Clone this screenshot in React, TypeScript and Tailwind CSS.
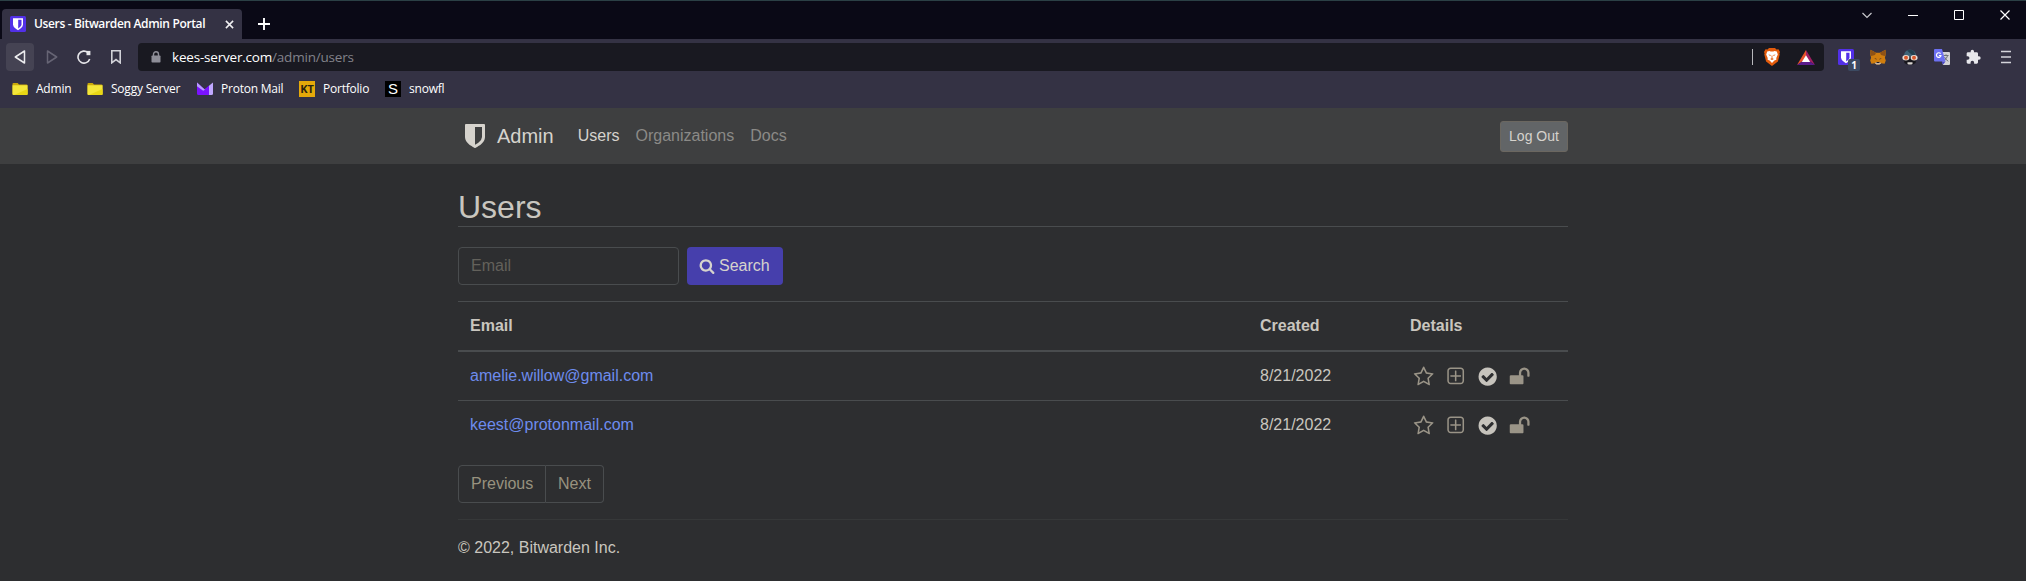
import React from 'react';

const UI = "font-['Open_Sans','Noto_Sans',sans-serif]";

const paths = {
  star: 'M1201 1004l306-297-422-62-189-382-189 382-422 62 306 297-73 421 378-199 377 199zm527-357q0 22-26 48l-363 354 86 500q1 7 1 20 0 50-41 50-19 0-40-12l-449-236-449 236q-22 12-40 12-21 0-31.500-14.500t-10.500-35.500q0-6 2-20l86-500-364-354q-25-27-25-48 0-37 56-46l502-73 225-455q19-41 49-41t49 41l225 455 502 73q56 9 56 46z',
  plus: 'M1344 800v64q0 14-9 23t-23 9h-352v352q0 14-9 23t-23 9h-64q-14 0-23-9t-9-23v-352h-352q-14 0-23-9t-9-23v-64q0-14 9-23t23-9h352v-352q0-14 9-23t23-9h64q14 0 23 9t9 23v352h352q14 0 23 9t9 23zm128 448v-832q0-66-47-113t-113-47h-832q-66 0-113 47t-47 113v832q0 66 47 113t113 47h832q66 0 113-47t47-113zm128-832v832q0 119-84.500 203.500t-203.500 84.500h-832q-119 0-203.500-84.500t-84.500-203.500v-832q0-119 84.500-203.500t203.500-84.500h832q119 0 203.500 84.500t84.500 203.500z',
  check: 'M1412 734q0-28-18-46l-91-90q-19-19-45-19t-45 19l-408 407-226-226q-19-19-45-19t-45 19l-91 90q-18 18-18 46 0 27 18 45l362 362q19 19 45 19 27 0 46-19l543-543q18-18 18-45zm252 162q0 209-103 385.500t-279.500 279.500-385.500 103-385.500-103-279.500-279.500-103-385.500 103-385.500 279.500-279.500 385.500-103 385.500 103 279.500 279.500 103 385.500z',
  unlock: 'M1728 576v256q0 26-19 45t-45 19h-64q-26 0-45-19t-19-45v-256q0-106-75-181t-181-75-181 75-75 181v192h96q40 0 68 28t28 68v576q0 40-28 68t-68 28h-960q-40 0-68-28t-28-68v-576q0-40 28-68t68-28h672v-192q0-185 131.500-316.500t316.500-131.500 316.500 131.500 131.500 316.500z',
  search: 'M1216 832q0-185-131.500-316.500t-316.500-131.500-316.500 131.500-131.500 316.500 131.500 316.500 316.500 131.500 316.500-131.500 131.500-316.500zm512 832q0 52-38 90t-90 38q-54 0-90-38l-343-342q-179 124-399 124-143 0-273.500-55.500t-225-150-150-225-55.500-273.500 55.500-273.500 150-225 225-150 273.500-55.500 273.500 55.500 225 150 150 225 55.500 273.500q0 220-124 399l343 343q37 37 37 90z',
  shield: 'M1344 960v-640h-448v1137q119-63 213-137 235-184 235-360zm192-768v768q0 86-33.500 170.500t-83 150-118 127.500-126.500 103-121 77.500-89.500 49.500-42.500 20q-12 6-26 6t-26-6q-16-7-42.500-20t-89.500-49.500-121-77.500-126.500-103-118-127.500-83-150-33.500-170.500v-768q0-26 19-45t45-19h1152q26 0 45 19t19 45z',
};

function Glyph({ name, className }: { name: keyof typeof paths; className: string }) {
  return (
    <svg viewBox="0 0 1792 1792" fill="currentColor" className={`block shrink-0 ${className}`}>
      <path d={paths[name]} />
    </svg>
  );
}

function BitwardenBadge() {
  return (
    <svg viewBox="0 0 16 16" className="block size-4 shrink-0">
      <rect width="16" height="16" rx="1.500" fill="#5230e8" />
      <path d="M3 2.300h10v6c0 2.700-2.600 4.700-5 5.900-2.400-1.200-5-3.200-5-5.900z" fill="#fff" />
      <path d="M8.200 3.700h3.300v4.600c0 1.700-1.600 3-3.300 4.100z" fill="#5230e8" />
    </svg>
  );
}

function Folder() {
  return (
    <svg viewBox="0 0 16 16" className="block size-4 shrink-0">
      <path d="M.5 3q0-1 1-1h4.200l1.300 1.400h7.500q1 0 1 1V13q0 1-1 1h-13q-1 0-1-1z" fill="#c9a90a" />
      <path d="M.5 4.300h15V13q0 1-1 1h-13q-1 0-1-1z" fill="#f3e63a" />
      <path d="M2 14L15.500 8v5q0 1-1 1z" fill="#e8d715" />
    </svg>
  );
}

function Bookmark({ icon, label, className }: { icon: React.ReactNode; label: string; className: string }) {
  return (
    <div className={`flex shrink-0 items-center gap-2 whitespace-nowrap ${className}`}>
      {icon}
      <span>{label}</span>
    </div>
  );
}

function TabStrip() {
  return (
    <div className="flex h-[39px] justify-between border-t border-[#2b4045] bg-[#0a0916] pl-0.5">
      <div className="flex pt-2">
        <div className="flex h-[30px] w-60 items-center rounded-t bg-[#343244] pl-2">
          <BitwardenBadge />
          <span className="ml-2 w-[189px] whitespace-nowrap text-[12px] font-semibold tracking-[-0.350px] text-white">
            Users - Bitwarden Admin Portal
          </span>
          <svg viewBox="0 0 10 10" className="ml-0.5 block size-[9px]" stroke="#f0f0f2" strokeWidth="1.700">
            <path d="M1 1l8 8M9 1l-8 8" />
          </svg>
        </div>
        <svg viewBox="0 0 12 12" className="ml-4 mt-[9px] block size-3" stroke="#fff" strokeWidth="1.900">
          <path d="M6 0v12M0 6h12" />
        </svg>
      </div>
      <svg viewBox="0 0 168 30" className="block h-[30px] w-[168px]" fill="none" stroke="#fff">
        <path d="M4.500 12l4.500 4.500 4.500-4.500" stroke="#c8c8cc" strokeWidth="1.200" />
        <path d="M50 14.500h10" />
        <path d="M96.500 9.500h9v9h-9z" />
        <path d="M142.500 9.500l9 9M151.500 9.500l-9 9" strokeWidth="1.200" />
      </svg>
    </div>
  );
}

function BraveIcon() {
  return (
    <svg viewBox="0 0 16 18" className="block h-[18px] w-4">
      <path d="M5 0h6l1.500 1.500 2-.2L16 4l-.6 1.500.3 1-1.800 7L8 18l-5.900-4.500-1.800-7 .3-1L0 4l1.500-2.700 2 .2z" fill="#e35b0c" />
      <path d="M3.200 3.600l2.300-.6 1.200.5h2.600l1.200-.5 2.300.6 1 3-1.500 3.400.1 1.800-2 .8L8 15l-2.400-2.400-2-.8.1-1.800-1.500-3.400z" fill="#fff" />
      <path d="M4.300 6.400l2.600.6-.7 1.100zM11.700 6.400l-2.600.6.7 1.100zM7.600 7.500h.8v2.700l1.500.9-1.900 1-1.900-1 1.500-.9z" fill="#e35b0c" />
    </svg>
  );
}

function BatIcon() {
  return (
    <svg viewBox="0 0 18 15" className="block h-[15px] w-[18px]">
      <path d="M9 0L0 15l9-6z" fill="#e8522a" />
      <path d="M9 0l9 15-9-6z" fill="#9e1f63" />
      <path d="M0 15h18L9 9z" fill="#5a1b8c" />
      <path d="M9 5.300L4.800 12h8.400z" fill="#fff" />
    </svg>
  );
}

function MetaMaskIcon() {
  return (
    <svg viewBox="0 0 16 16" className="block size-4">
      <path d="M.5.8L6 3.800h4l5.500-3 .2 4.700-.8 3.300.9 2.700-1.200 3.200-3.400-.5L9.500 15.500h-3l-1.700-1.300-3.400.5L.2 11.500l.9-2.700L.3 5.500z" fill="#cf7d0e" />
      <path d="M.5.8L6 3.800 5 6 1.300 7 .3 5.500zM15.500.8L10 3.800 11 6l3.700 1 1-1.500z" fill="#8e5216" />
      <path d="M4.200 9l2.100.8.2 1zM11.800 9l-2.100.8-.2 1z" fill="#2a2030" />
      <path d="M4.800 14.200l1.500-1.200h3.400l1.500 1.200-1.700 1.300h-3z" fill="#c8b8a8" />
      <path d="M6.600 12.900h2.800l.2 1.200H6.400z" fill="#221a22" />
    </svg>
  );
}

function SpyIcon() {
  return (
    <svg viewBox="0 0 16 16" className="block size-4">
      <path d="M2 7.500C2 3 4.500.8 8 .8s6 2.200 6 6.700z" fill="#3f6478" />
      <path d="M5 1.500l5 4.500h3C13 3 11 .8 8 .8z" fill="#24404f" />
      <path d="M1.500 8h13l-1 6L11 15.500H5L2.500 14z" fill="#17161c" />
      <path d="M5.500 13.300h5v1.800q-2.500 1-5 0z" fill="#d9d4d0" />
      <ellipse cx="3.900" cy="8.800" rx="3.500" ry="2.700" fill="#e9ded6" />
      <ellipse cx="12.100" cy="8.800" rx="3.500" ry="2.700" fill="#e9ded6" />
      <circle cx="4" cy="8.800" r="2" fill="#d9592c" />
      <circle cx="12" cy="8.800" r="2" fill="#d9592c" />
    </svg>
  );
}

function TranslateIcon() {
  return (
    <svg viewBox="0 0 16 16" className="block size-4">
      <path d="M6 3h9q1 0 1 1v11q0 1-1 1H9z" fill="#d4d4d6" />
      <path d="M9.500 6.500h5M12 5.300v1.200M13.700 6.500q-1 3.500-3.700 5M10.500 8q1 2.500 3.800 4.300" stroke="#6f7478" fill="none" />
      <path d="M1 0h7l3.500 12.500H1q-1 0-1-1V1q0-1 1-1z" fill="#6c70f2" />
      <path d="M7.500 12.500h4L9 15.800z" fill="#4a49c4" />
      <path d="M6.600 4.700A2.300 2.300 0 1 0 7 6.500H4.900" stroke="#fff" strokeWidth="1.200" fill="none" />
    </svg>
  );
}

function Toolbar() {
  return (
    <div className="flex h-9 items-center pl-1.5 pr-3">
      <div className="flex h-7 w-7 items-center justify-center rounded bg-[#454353]">
        <svg viewBox="0 0 12 14" className="block h-3.5 w-3" fill="none" stroke="#ececee" strokeWidth="1.500" strokeLinejoin="round">
          <path d="M10.500 1v12L1.300 7z" />
        </svg>
      </div>
      <svg viewBox="0 0 12 14" className="ml-3 block h-3.5 w-3" fill="none" stroke="#666474" strokeWidth="1.500" strokeLinejoin="round">
        <path d="M1.500 1v12l9.200-6z" />
      </svg>
      <svg viewBox="0 0 14 14" className="ml-[19px] block size-3.5" fill="none" stroke="#e6e6ea" strokeWidth="1.600">
        <path d="M12.700 9A6 6 0 1 1 11 2.600" />
        <path d="M9.500.9h3.900v4.300h-3.900z" fill="#e6e6ea" stroke="none" />
      </svg>
      <svg viewBox="0 0 10 14" className="ml-[19px] block h-3.5 w-3" fill="none" stroke="#d2d2d8" strokeWidth="1.600">
        <path d="M.8.800h8.400v12L5 9.600.8 12.800z" />
      </svg>
      <div className="ml-4 flex h-7 w-[1686px] items-center rounded bg-[#191921] pl-[13px]">
        <svg viewBox="0 0 10 12" className="block h-3 w-2.5">
          <path d="M2.500 5V3.300a2.500 2.500 0 0 1 5 0V5" fill="none" stroke="#8e8e98" strokeWidth="1.400" />
          <rect x=".5" y="4.500" width="9" height="7" rx=".8" fill="#8e8e98" />
        </svg>
        <div className="ml-[11px] flex-1 whitespace-nowrap text-[13.500px] leading-7 tracking-[-0.200px] text-[#82828a]">
          <span className="text-white">kees-server.com</span>/admin/users
        </div>
        <div className="h-4 w-px bg-[#b8b8bc]" />
        <div className="ml-[11px]"><BraveIcon /></div>
        <div className="ml-[17px] mr-[9px]"><BatIcon /></div>
      </div>
      <div className="ml-3.5 flex items-center gap-4">
        <div className="relative">
          <BitwardenBadge />
          <span className="absolute left-[10px] top-[10px] flex h-3 w-3 items-center justify-center rounded-xs bg-[#3c4a62] text-[10px] font-bold leading-3 text-white">1</span>
        </div>
        <MetaMaskIcon />
        <SpyIcon />
        <TranslateIcon />
        <svg viewBox="1 0 24 24" className="block size-4" fill="#e8e8ec">
          <path d="M20.500 11H19V7c0-1.100-.9-2-2-2h-4V3.500a2.500 2.500 0 0 0-5 0V5H4c-1.100 0-2 .9-2 2v3.800h1.500a2.700 2.700 0 0 1 0 5.400H2V20c0 1.100.9 2 2 2h3.800v-1.500a2.700 2.700 0 0 1 5.400 0V22H17c1.100 0 2-.9 2-2v-4h1.500a2.500 2.500 0 0 0 0-5z" />
        </svg>
        <svg viewBox="0 0 16 16" className="block size-4" stroke="#d4d4da" strokeWidth="1.700">
          <path d="M3 2.500h10M3 8h10M3 13.500h10" />
        </svg>
      </div>
    </div>
  );
}

function Bookmarks() {
  return (
    <div className="flex h-7 items-center pl-3 text-[12px] tracking-[-0.220px] text-white">
      <Bookmark className="w-[75px]" icon={<Folder />} label="Admin" />
      <Bookmark className="w-[110px]" icon={<Folder />} label="Soggy Server" />
      <Bookmark
        className="w-[102px]"
        label="Proton Mail"
        icon={
          <svg viewBox="0 0 16 16" className="block size-4 shrink-0">
            <path d="M0 1.500l7.500 6.800L12 4.500V14H1.500Q0 14 0 12.500z" fill="#7a12ff" />
            <path d="M0 1.500l8 7.200-1.800 1L0 5.300z" fill="#b99cff" />
            <path d="M16 1.500V12.500q0 1.500-1.500 1.500H12V4.800z" fill="#c0a8ff" />
          </svg>
        }
      />
      <Bookmark
        className="w-[86px]"
        label="Portfolio"
        icon={<span className="flex size-4 shrink-0 items-center justify-center bg-[#e5a90a] text-[11px] font-bold leading-4 tracking-[-0.200px] text-[#2a2410]">KT</span>}
      />
      <Bookmark
        className="w-20"
        label="snowfl"
        icon={<span className="flex size-4 shrink-0 items-center justify-center bg-black font-['Liberation_Sans',sans-serif] text-[15px] leading-4 text-white">S</span>}
      />
    </div>
  );
}

const users = [
  { email: 'amelie.willow@gmail.com', created: '8/21/2022' },
  { email: 'keest@protonmail.com', created: '8/21/2022' },
];

function UserTable() {
  return (
    <div className="mt-4">
      <div className="flex h-[51px] border-b-2 border-t border-[#494c4e] font-bold leading-[48px]">
        <div className="w-[790px] pl-3">Email</div>
        <div className="w-[150px] pl-3">Created</div>
        <div className="w-[170px] pl-3">Details</div>
      </div>
      {users.map((u, i) => (
        <div key={u.email} className={`flex leading-[48px] ${i ? 'h-[49px] border-t border-[#494c4e]' : 'h-12'}`}>
          <div className="w-[790px] pl-3 text-[#6d8cee]">{u.email}</div>
          <div className="w-[150px] pl-3">{u.created}</div>
          <div className="flex h-12 w-[170px] items-start gap-[10.700px] pl-[15px] pt-[13.800px] text-[#9a9487]">
            <Glyph name="star" className="size-[21.330px]" />
            <Glyph name="plus" className="size-[21.330px]" />
            <Glyph name="check" className="size-[21.330px] text-[#c6c3bc]" />
            <Glyph name="unlock" className="size-[21.330px]" />
          </div>
        </div>
      ))}
    </div>
  );
}

export default function App() {
  return (
    <div className="h-[581px] w-[2026px] overflow-hidden bg-[#2d2e30] font-['Liberation_Sans',Arial,sans-serif] text-base text-[#c9c6bf]">
      <header className={`h-[108px] bg-[#343244] ${UI}`}>
        <TabStrip />
        <Toolbar />
        <Bookmarks />
      </header>

      <nav className="h-14 bg-[#3e3f40]">
        <div className="mx-auto flex h-14 w-[1110px] items-center">
          <Glyph name="shield" className="ml-[3px] size-7 text-[#d6d3cd]" />
          <span className="ml-2 text-[20px] leading-[30px] text-[#d6d3cd]">Admin</span>
          <div className="ml-6 flex gap-4 text-[#8b8a87]">
            <span className="text-[#d6d3cd]">Users</span>
            <span>Organizations</span>
            <span>Docs</span>
          </div>
          <button className="ml-auto h-[31px] w-[68px] whitespace-nowrap rounded-[3px] border border-[#6b6760] bg-[#626567] text-[14px] leading-[21px] text-[#d6d3cd]">
            Log Out
          </button>
        </div>
      </nav>

      <main className="mx-auto w-[1110px]">
        <h1 className="mt-6 h-[39px] border-b border-[#494c4e] text-[32px] leading-[38px]">Users</h1>
        <form className="mt-5 flex gap-2">
          <input
            placeholder="Email"
            className="h-[38px] w-[221px] rounded border border-[#494c4e] bg-transparent px-3 leading-6 placeholder:text-[#63615b]"
          />
          <button type="button" className="flex h-[38px] w-24 items-center gap-1 rounded bg-[#463fac] pl-3 text-[#d6d3cd]">
            <Glyph name="search" className="size-4" />
            Search
          </button>
        </form>
        <UserTable />
        <div className="mt-4 flex h-[38px] text-[#98927f]">
          <div className="w-[88px] rounded-l border border-[#494c4e] pl-3 leading-9">Previous</div>
          <div className="w-[58px] rounded-r border border-l-0 border-[#494c4e] pl-3 leading-9">Next</div>
        </div>
        <footer className="mt-4 border-t border-[#363839] pt-4 leading-6">© 2022, Bitwarden Inc.</footer>
      </main>
    </div>
  );
}
